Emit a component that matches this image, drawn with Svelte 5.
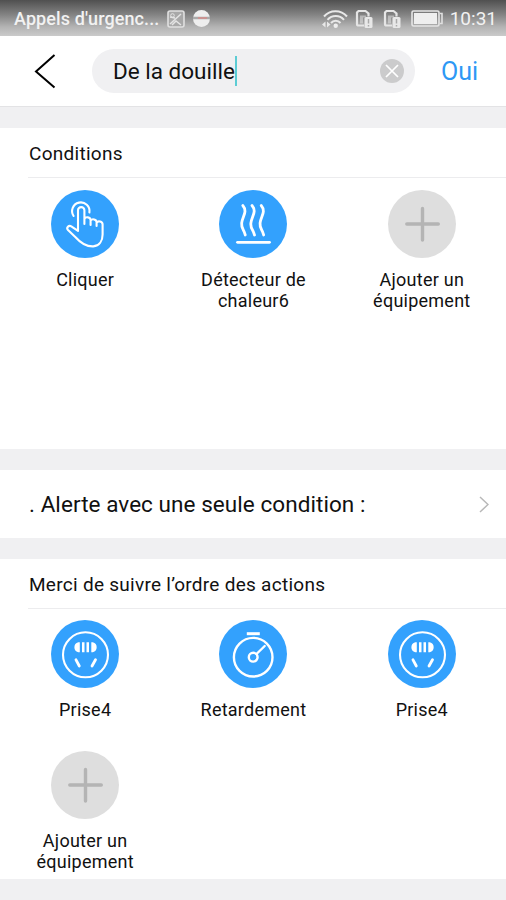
<script>
  let name = "De la douille";

  const conditions = [
    { id: 1, icon: "tap", label: "Cliquer" },
    { id: 2, icon: "heat", label: "Détecteur de chaleur6" },
    { id: 3, icon: "add", label: "Ajouter un équipement" }
  ];

  const actions = [
    { id: 1, icon: "socket", label: "Prise4" },
    { id: 2, icon: "timer", label: "Retardement" },
    { id: 3, icon: "socket", label: "Prise4" },
    { id: 4, icon: "add", label: "Ajouter un équipement" }
  ];

  const groups = [
    { title: "Conditions", kind: "conditions", items: conditions },
    { title: "Merci de suivre l’ordre des actions", kind: "actions", items: actions }
  ];

  function clear() {
    name = "";
  }
</script>

{#snippet deviceIcon(icon)}
  <svg class="icon" class:add={icon === "add"} viewBox="0 0 68 68">
    <circle class="disc" cx="34" cy="34" r="34" />
    {#if icon === "tap"}
      <path d="M22.6 26A8.700 8.700 0 1 1 38.400 22.500" />
      <path d="M27 40.500V20.300a3.200 3.200 0 0 1 6.400 0V34M33.400 29.500v-.5c1-2.600 6.200-2.200 6.200 1.300V35M39.600 30.500c1.500-2 6-1.400 6 1.800V36M45.600 32.500c1.500-2 6-1.200 6 2v10c0 6.500-3.300 11.500-9.300 11.900-8.300.4-13.500-4.400-17.500-8.900l-7.800-7.500c-2.100-2.200.7-5.200 3.300-3.700l6.700 4.500" />
    {:else if icon === "heat"}
      <g class="thick">
        <path d="M23.800 15.500c7 8-5.500 14.500.5 24.500 1 1.600 1.400 3 2 5" />
        <path d="M33 15.500c7 8-5.500 14.500.5 24.500 1 1.600 1.400 3 2 5" />
        <path d="M42.200 15.500c7 8-5.500 14.500.5 24.500 1 1.600 1.400 3 2 5" />
        <path d="M18.500 52.300h32" />
      </g>
    {:else if icon === "socket"}
      <circle cx="34.500" cy="34.800" r="22.500" />
      <path class="solid" d="M28.800 22.300v10h-1.500c-5.200-.8-5.200-9.200 0-10zM40.300 22.300v10h1.500c5.200-.8 5.200-9.200 0-10zM31 22.300h2.500v10H31zM35.500 22.300H38v10h-2.500z" />
      <path class="leg" d="M25 39.800l3.300 6.200M44.500 39.800L41 46" />
    {:else if icon === "timer"}
      <circle class="dial" cx="34.200" cy="37.200" r="19.300" />
      <circle class="hub" cx="34.200" cy="37.200" r="4.400" />
      <path class="hub" d="M37.500 34L45.700 26" />
      <path class="cap" d="M27.800 13.700h13" />
    {:else}
      <path class="plus" d="M34.500 18.500v31.500M18.800 34h31.500" />
    {/if}
  </svg>
{/snippet}

{#snippet sim()}
  <svg class="sim" width="19" height="20" viewBox="0 0 19 20">
    <path d="M9 16.500H3.500a1.500 1.500 0 0 1-1.500-1.500V3.500l1.500-1.500h7l3 2.500v3" fill="none" stroke="#e5e5e5" stroke-width="2.200" />
    <path d="M5 6.500h6v2H8v6H5z" fill="#e5e5e5" opacity=".5" />
    <rect x="9.500" y="8" width="8" height="11" rx="1.500" fill="#e8e8e8" />
    <path d="M13.500 10v4.500M13.500 16v1.500" stroke="#aaa" stroke-width="1.500" />
  </svg>
{/snippet}

{#snippet group(section)}
  <section class={section.kind}>
    <h2>{section.title}</h2>
    <div class="grid">
      {#each section.items as item (item.id)}
        <div class="item">
          {@render deviceIcon(item.icon)}
          <span>{item.label}</span>
        </div>
      {/each}
    </div>
  </section>
{/snippet}

<div class="screen">
  <div class="status">
    <span class="carrier">Appels d'urgenc...</span>
    <svg class="picture" width="18" height="18" viewBox="0 0 18 18">
      <rect x="1" y="1" width="16" height="16" rx="2" fill="#a8a8a8" stroke="#e0e0e0" stroke-width="1.600" />
      <circle cx="5.500" cy="5.500" r="1.800" fill="none" stroke="#e4e4e4" />
      <path d="M3 14L14 4M5 15l4-4 5 4M8 8L3 7" fill="none" stroke="#e4e4e4" stroke-width="1.500" />
    </svg>
    <svg class="ball" width="17" height="17" viewBox="0 0 17 17">
      <circle cx="8.500" cy="8.500" r="8.500" fill="#eee" />
      <path d="M0 8h17" stroke="#aaa" stroke-width="2.500" />
      <path d="M5 8h9" stroke="#d48b88" stroke-width="1.500" />
    </svg>
    <svg class="wifi" width="26" height="20" viewBox="0 0 26 20">
      <path d="M2 7.500C8 .5 19 .5 25 7.500M5.500 10.800c4.500-5 12-5 16.500 0M9 14c2.500-3 7-3 9.500 0" fill="none" stroke="#e8e8e8" stroke-width="2" />
      <circle cx="13.700" cy="16.800" r="2.200" fill="#eee" />
      <path d="M0 15.500l3.500-3v6zM8.500 15.500L5 12.500v6z" fill="#e8e8e8" />
    </svg>
    {@render sim()}
    {@render sim()}
    <svg class="battery" width="33" height="17" viewBox="0 0 33 17">
      <rect x="1" y="1" width="27" height="15" rx="1.500" fill="none" stroke="#e5e5e5" stroke-width="1.600" />
      <rect x="3" y="3" width="23" height="11" fill="#eee" />
      <path d="M29 3.500h2v10h-2" fill="none" stroke="#e0e0e0" stroke-width="1.600" />
    </svg>
    <span class="time">10:31</span>
  </div>

  <header>
    <svg class="back" width="22" height="36" viewBox="0 0 22 36">
      <path d="M20.500 2L2 18.500 20.500 34.500" fill="none" stroke="#000" stroke-width="2" />
    </svg>
    <div class="field">
      <span class="name">{name}</span>
      <button aria-label="Effacer" on:click={clear}>
        <svg width="24" height="24" viewBox="0 0 24 24">
          <circle cx="12" cy="12" r="12" fill="#cbcbcc" />
          <path d="M6 6l12 12M18 6L6 18" stroke="#fff" stroke-width="1.700" />
        </svg>
      </button>
    </div>
    <span class="confirm">Oui</span>
  </header>

  {@render group(groups[0])}

  <div class="alert">
    <span>. Alerte avec une seule condition :</span>
    <svg width="10" height="17" viewBox="0 0 10 17">
      <path d="M1 1l8 7.500L1 16" fill="none" stroke="#b8b8b8" stroke-width="1.500" />
    </svg>
  </div>

  {@render group(groups[1])}
</div>

<style>
  :global(body) {
    background: #f0f0f2;
  }

  .screen {
    width: 506px;
    height: 900px;
    overflow: hidden;
    display: flex;
    flex-direction: column;
    background: #f0f0f2;
    color: #111;
    font-family: Roboto, sans-serif;
  }

  .status {
    height: 36px;
    flex: none;
    box-sizing: border-box;
    display: flex;
    align-items: center;
    padding: 1px 9px 0 14px;
    background: linear-gradient(#505050, #828282 40%, #b4b4b4 75%, #cacaca);
    color: #f2f2f2;
    white-space: nowrap;
  }

  .carrier {
    width: 153px;
    font-size: 18px;
    font-weight: 500;
    letter-spacing: 0.1px;
  }

  .ball {
    margin-left: 8px;
  }

  .wifi {
    margin-left: auto;
    margin-right: 7px;
  }

  .sim {
    margin-right: 9px;
  }

  .battery {
    margin-right: 6px;
  }

  .time {
    font-size: 19px;
  }

  header {
    height: 70px;
    flex: none;
    display: flex;
    align-items: center;
    background: #fff;
    border-bottom: 1px solid #e3e3e5;
    margin-bottom: 21px;
  }

  .back {
    margin: 0 36px 0 34px;
  }

  .field {
    width: 323px;
    height: 44px;
    box-sizing: border-box;
    display: flex;
    align-items: center;
    justify-content: space-between;
    padding: 0 11px 0 21px;
    border-radius: 22px;
    background: #f0f0f2;
  }

  .name {
    font-size: 22.5px;
    line-height: 30px;
    border-right: 2px solid #5cccd4;
  }

  button {
    display: flex;
    padding: 0;
    border: 0;
    background: none;
  }

  .confirm {
    margin-left: 26px;
    font-size: 25px;
    color: #2d98f5;
  }

  section {
    flex: none;
    box-sizing: border-box;
    background: #fff;
  }

  .conditions {
    height: 321px;
  }

  .actions {
    height: 320px;
  }

  h2 {
    height: 50px;
    box-sizing: border-box;
    margin: 0 0 0 28px;
    padding-left: 1px;
    border-bottom: 1px solid #ececee;
    font-size: 19px;
    font-weight: 400;
    line-height: 51px;
    letter-spacing: 0.28px;
  }

  .grid {
    display: grid;
    grid-template-columns: repeat(3, 1fr);
    row-gap: 20px;
    padding: 12px 0 0 1px;
  }

  .actions .grid {
    padding-top: 11px;
  }

  .item {
    display: flex;
    flex-direction: column;
    align-items: center;
    gap: 11px;
    text-align: center;
  }

  .actions .item {
    min-height: 111px;
  }

  .item span {
    width: 120px;
    font-size: 18px;
    line-height: 21px;
    letter-spacing: 0.25px;
  }

  .icon {
    width: 68px;
    height: 68px;
    fill: none;
    stroke: #fff;
    stroke-width: 2.1;
    stroke-linecap: round;
    stroke-linejoin: round;
  }

  .disc {
    fill: #33a1fd;
    stroke: none;
  }

  .add .disc {
    fill: #dedede;
  }

  .thick {
    stroke-width: 2.8;
  }

  .solid {
    fill: #fff;
    stroke: none;
  }

  .leg {
    stroke-width: 2.8;
  }

  .dial,
  .hub {
    stroke-width: 2.4;
  }

  .cap {
    stroke-width: 3;
    stroke-linecap: butt;
  }

  .plus {
    stroke: #b4b4b4;
    stroke-width: 3.4;
  }

  .alert {
    height: 68px;
    flex: none;
    display: flex;
    align-items: center;
    justify-content: space-between;
    margin: 21px 0;
    padding: 0 17px 0 29px;
    background: #fff;
    font-size: 22.5px;
    letter-spacing: 0.06px;
  }
</style>
